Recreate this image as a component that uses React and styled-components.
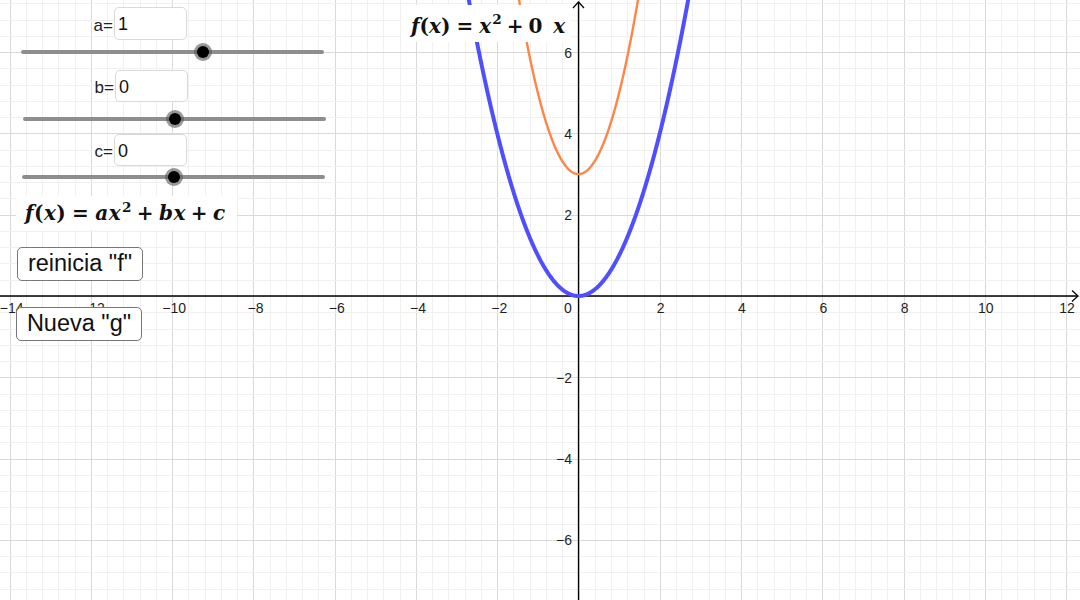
import React from "react";
import styled, { createGlobalStyle } from "styled-components";

const Global = createGlobalStyle`
  html, body { margin: 0; padding: 0; background: #fff; overflow: hidden; }
  body { font-family: "Liberation Sans", Arial, sans-serif; }
`;

const W = 1080;
const H = 600;
const OX = 578.5;
const OY = 296;
const U = 40.63;
const px = (v) => OX + v * U;
const py = (v) => OY - v * U;

const Stage = styled.div`
  position: relative;
  width: 1080px;
  height: 600px;
  overflow: hidden;
  background: #fff;
`;

const Canvas = styled.svg`
  display: block;
  width: 1080px;
  height: 600px;
`;

const GridLine = styled.line`
  stroke: ${(p) => (p.$major ? "#d9d9d9" : "#f0f0f0")};
  stroke-width: 1;
  shape-rendering: crispEdges;
`;

const AxisLine = styled.line`
  stroke: #000;
  stroke-width: 1.3;
`;

const ArrowHead = styled.polyline`
  fill: none;
  stroke: #000;
  stroke-width: 1.2;
`;

const TickLabel = styled.text`
  font-family: "Liberation Sans", Arial, sans-serif;
  font-size: 14px;
  fill: #1e1e1e;
`;

const Curve = styled.path`
  fill: none;
  stroke: ${(p) => p.$color};
  stroke-width: ${(p) => p.$w};
  stroke-linejoin: round;
`;

const ControlColumn = styled.div`
  position: absolute;
  left: 0;
  top: 0;
  display: flex;
  flex-direction: column;
  align-items: flex-start;
`;

const SliderBlock = styled.div`
  display: flex;
  flex-direction: column;
  align-items: flex-start;
  margin-top: ${(p) => p.$top}px;
`;

const ValueRow = styled.div`
  display: grid;
  grid-template-columns: ${(p) => p.$inputX}px 73px;
  align-items: center;
`;

const VarLabel = styled.span`
  justify-self: end;
  padding-right: 1px;
  padding-top: 3px;
  font-size: 17px;
  line-height: 1;
  color: #222;
`;

const ValueInput = styled.input`
  box-sizing: border-box;
  width: 73px;
  height: ${(p) => p.$h}px;
  margin: 0;
  border: 1px solid #d9d9d9;
  border-radius: 5px;
  background: #fff;
  padding: 2px 0 0 3px;
  font-family: "Liberation Sans", Arial, sans-serif;
  font-size: 18px;
  color: #111;
  outline: none;
`;

const Track = styled.div`
  position: relative;
  margin-top: ${(p) => p.$gap}px;
  margin-left: ${(p) => p.$x}px;
  width: 303px;
  height: 4px;
  border-radius: 2px;
  background: #8e8e8e;
`;

const Knob = styled.span`
  position: absolute;
  top: 50%;
  left: ${(p) => p.$pos}%;
  width: 12px;
  height: 12px;
  transform: translate(-50%, -50%);
  background: #000;
  border-radius: 50%;
  box-shadow: 0 0 0 3px rgba(85, 85, 85, 0.6);
`;

const FormulaCard = styled.div`
  box-sizing: border-box;
  margin-top: 17px;
  margin-left: 16px;
  width: 221px;
  height: 34px;
  background: #fff;
  padding-left: 9px;
  display: flex;
  align-items: center;
`;

const TopFormula = styled.div`
  position: absolute;
  left: 402px;
  top: 5px;
  box-sizing: border-box;
  width: 168px;
  height: 37px;
  background: #fff;
  padding: 4px 0 0 9px;
  display: flex;
  align-items: center;
`;

const MathLine = styled.span`
  font-family: "DejaVu Serif", "Liberation Serif", serif;
  font-weight: bold;
  font-size: 20px;
  letter-spacing: ${(p) => p.$track || 0}px;
  color: #111;
  white-space: nowrap;
  line-height: 1;
`;

const MVar = styled.i`
  font-style: italic;
`;

const MOp = styled.span`
  margin: 0 ${(p) => p.$space}em;
`;

const MSup = styled.sup`
  font-size: 0.68em;
  vertical-align: 0.6em;
  line-height: 0;
  margin-left: 1px;
`;

const ActionButton = styled.button`
  box-sizing: border-box;
  margin-top: ${(p) => p.$top}px;
  margin-left: ${(p) => p.$x}px;
  width: 126px;
  height: 34px;
  padding: 0 0 2px;
  border: 1.5px solid #767676;
  border-radius: 5px;
  background: #fff;
  font-family: "Liberation Sans", Arial, sans-serif;
  font-size: 23.5px;
  color: #111;
  cursor: pointer;
  white-space: nowrap;
`;

function buildGrid() {
  const step = U * 0.4;
  const lines = [];
  const kMinX = Math.ceil(-OX / step);
  const kMaxX = Math.floor((W - OX) / step);
  for (let k = kMinX; k <= kMaxX; k++) {
    const x = Math.round(OX + k * step) + 0.5;
    lines.push({ key: "vx" + k, x1: x, y1: 0, x2: x, y2: H, major: k % 5 === 0 });
  }
  const kMinY = Math.ceil(-OY / step);
  const kMaxY = Math.floor((H - OY) / step);
  for (let k = kMinY; k <= kMaxY; k++) {
    const y = Math.round(OY + k * step) + 0.5;
    lines.push({ key: "hy" + k, x1: 0, y1: y, x2: W, y2: y, major: k % 5 === 0 });
  }
  return lines;
}

function curvePath(fn, from, to) {
  let d = "";
  for (let x = from; x <= to + 1e-9; x += 0.01) {
    const X = px(x);
    const Y = py(fn(x));
    d += (d ? " L" : "M") + X.toFixed(2) + " " + Y.toFixed(2);
  }
  return d;
}

const grid = buildGrid();
const xTicks = [-14, -12, -10, -8, -6, -4, -2, 2, 4, 6, 8, 10, 12];
const yTicks = [6, 4, 2, -2, -4, -6];
const fmt = (n) => (n < 0 ? "\u2212" + Math.abs(n) : String(n));

const sliders = [
  { name: "a", value: 1, top: 7, inputX: 114, h: 33, gap: 10, x: 21 },
  { name: "b", value: 0, top: 16, inputX: 115, h: 32, gap: 15, x: 23 },
  { name: "c", value: 0, top: 13, inputX: 114, h: 32, gap: 9, x: 22 },
];

function Graph() {
  return (
    <Canvas viewBox={`0 0 ${W} ${H}`}>
      {grid.map((l) => (
        <GridLine key={l.key} x1={l.x1} y1={l.y1} x2={l.x2} y2={l.y2} $major={l.major} />
      ))}
      <AxisLine x1={0} y1={OY} x2={W - 2} y2={OY} />
      <AxisLine x1={OX} y1={2} x2={OX} y2={H} />
      <ArrowHead points={`${W - 8},${OY - 5.5} ${W - 2},${OY} ${W - 8},${OY + 5.5}`} />
      <ArrowHead points={`${OX - 5.5},8 ${OX},2 ${OX + 5.5},8`} />
      {xTicks.map((t) => (
        <TickLabel key={"xt" + t} x={px(t) + (t < 0 ? 2 : 1)} y={313} textAnchor="middle">
          {fmt(t)}
        </TickLabel>
      ))}
      <TickLabel x={568} y={313} textAnchor="middle">0</TickLabel>
      {yTicks.map((t) => (
        <TickLabel key={"yt" + t} x={572} y={py(t) + 5.5} textAnchor="end">
          {fmt(t)}
        </TickLabel>
      ))}
      <Curve d={curvePath((x) => 2 * x * x + 3, -1.6, 1.6)} $color="#ff8547" $w={2.4} />
      <Curve d={curvePath((x) => x * x, -2.9, 2.9)} $color="#4f4fff" $w={4} />
    </Canvas>
  );
}

function Formula({ track, children }) {
  return <MathLine $track={track}>{children}</MathLine>;
}

export default function App() {
  return (
    <>
      <Global />
      <Stage>
        <Graph />
        <TopFormula>
          <Formula>
            <MVar>f</MVar>(<MVar>x</MVar>)<MOp $space={0.3}>=</MOp>
            <MVar>x</MVar>
            <MSup>2</MSup>
            <MOp $space={0.25}>+</MOp>0<MOp $space={0.1}> </MOp>
            <MVar>x</MVar>
          </Formula>
        </TopFormula>
        <ControlColumn>
          {sliders.map((s) => (
            <SliderBlock key={s.name} $top={s.top}>
              <ValueRow $inputX={s.inputX}>
                <VarLabel>{s.name}=</VarLabel>
                <ValueInput $h={s.h} readOnly value={String(s.value)} />
              </ValueRow>
              <Track $gap={s.gap} $x={s.x}>
                <Knob $pos={((s.value + 5) / 10) * 100} />
              </Track>
            </SliderBlock>
          ))}
          <FormulaCard>
            <Formula track={0.4}>
              <MVar>f</MVar>(<MVar>x</MVar>)<MOp $space={0.3}>=</MOp>
              <MVar>a</MVar>
              <MVar>x</MVar>
              <MSup>2</MSup>
              <MOp $space={0.25}>+</MOp>
              <MVar>b</MVar>
              <MVar>x</MVar>
              <MOp $space={0.25}>+</MOp>
              <MVar>c</MVar>
            </Formula>
          </FormulaCard>
          <ActionButton $top={17} $x={17}>reinicia "f"</ActionButton>
          <ActionButton $top={26} $x={16}>Nueva "g"</ActionButton>
        </ControlColumn>
      </Stage>
    </>
  );
}
